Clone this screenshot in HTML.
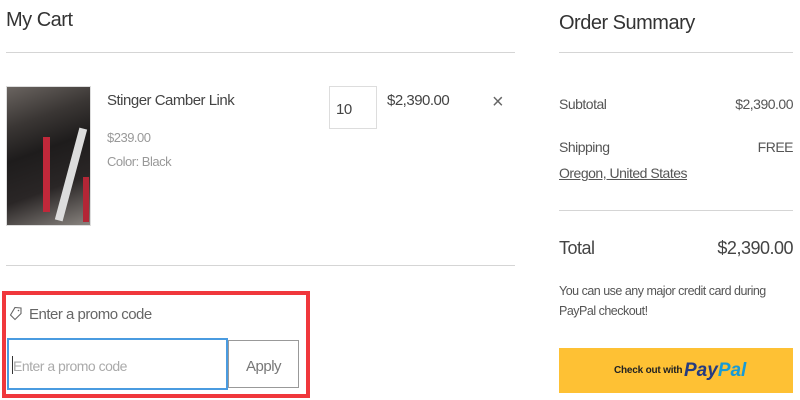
<!DOCTYPE html>
<html><head><style>
body{margin:0;width:800px;height:400px;overflow:hidden;background:#fff;font-family:"Liberation Sans",sans-serif;color:#333;position:relative}
.a{position:absolute;white-space:nowrap}
.n{letter-spacing:-0.5px}
.hr{position:absolute;height:1px;background:#d5d5d5}
</style></head><body>
<div class="a n" style="left:6px;top:9px;font-size:20px;color:#333">My Cart</div>
<div class="hr" style="left:6px;top:52px;width:509px"></div>
<div class="a" style="left:6px;top:86px;width:83px;height:138px;border:1px solid #ddd;background:linear-gradient(160deg,#6a6460 0%,#3a3634 25%,#1e1c1c 45%,#2a2626 70%,#8a8580 100%)">
 <div style="position:absolute;left:36px;top:50px;width:7px;height:75px;background:#c0283a"></div>
 <div style="position:absolute;left:60px;top:40px;width:8px;height:95px;background:#ddd;transform:rotate(15deg)"></div>
 <div style="position:absolute;left:76px;top:90px;width:6px;height:45px;background:#b32636"></div>
</div>
<div class="a n" style="left:107px;top:92px;font-size:15px;color:#444">Stinger Camber Link</div>
<div class="a n" style="left:107px;top:130px;font-size:13px;color:#999">$239.00</div>
<div class="a n" style="left:107px;top:154px;font-size:13px;color:#999">Color: Black</div>
<div class="a" style="left:329px;top:86px;width:48px;height:43px;border:1px solid #ddd;box-sizing:border-box"></div>
<div class="a n" style="left:336px;top:101px;font-size:15px;color:#444">10</div>
<div class="a n" style="left:387px;top:92px;font-size:15px;color:#444">$2,390.00</div>
<div class="a" style="left:492px;top:91px;font-size:20px;color:#666">×</div>
<div class="hr" style="left:6px;top:265px;width:509px"></div>
<div class="a" style="left:2px;top:291px;width:308px;height:107px;border:4px solid #f0373c;box-sizing:border-box"></div>
<svg class="a" style="left:9px;top:306px" width="14" height="15" viewBox="0 0 14 15"><path d="M6 1.5 L12 2 L12 7.5 L6 13.5 L1.5 9 Z" fill="none" stroke="#666" stroke-width="1.1"/><circle cx="9.5" cy="4.5" r="0.8" fill="#666"/></svg>
<div class="a n" style="left:29px;top:306px;font-size:15px;color:#666">Enter a promo code</div>
<div class="a" style="left:7px;top:338px;width:221px;height:52px;border:2px solid #4a9be0;box-sizing:border-box"></div>
<div class="a" style="left:12px;top:356px;width:1px;height:18px;background:#333"></div>
<div class="a n" style="left:13px;top:358px;font-size:14px;color:#aaa">Enter a promo code</div>
<div class="a" style="left:228px;top:340px;width:71px;height:48px;border:1px solid #999;box-sizing:border-box"></div>
<div class="a n" style="left:246px;top:358px;font-size:15px;color:#777">Apply</div>

<div class="a n" style="left:559px;top:12px;font-size:20px;color:#333">Order Summary</div>
<div class="hr" style="left:559px;top:52px;width:234px"></div>
<div class="a n" style="left:559px;top:96px;font-size:14px;color:#555">Subtotal</div>
<div class="a n" style="right:7px;top:96px;font-size:14px;color:#555">$2,390.00</div>
<div class="a n" style="left:559px;top:139px;font-size:14px;color:#555">Shipping</div>
<div class="a n" style="right:7px;top:139px;font-size:14px;color:#555">FREE</div>
<div class="a n" style="left:559px;top:165px;font-size:14px;color:#555;text-decoration:underline">Oregon, United States</div>
<div class="hr" style="left:559px;top:210px;width:234px"></div>
<div class="a n" style="left:559px;top:238px;font-size:18px;color:#444">Total</div>
<div class="a n" style="right:7px;top:238px;font-size:18px;color:#444">$2,390.00</div>
<div class="a n" style="left:559px;top:281px;font-size:12.5px;color:#555;line-height:20px">You can use any major credit card during<br>PayPal checkout!</div>
<div class="a" style="left:559px;top:348px;width:234px;height:45px;background:#fec134"></div>
<div class="a" style="left:614px;top:365px;font-size:10px;font-weight:bold;color:#222;letter-spacing:-0.2px">Check out with</div>
<div class="a" style="left:684px;top:360px;font-size:19px;font-weight:bold;font-style:italic"><span style="color:#253b80">Pay</span><span style="color:#179bd7">Pal</span></div>
</body></html>
